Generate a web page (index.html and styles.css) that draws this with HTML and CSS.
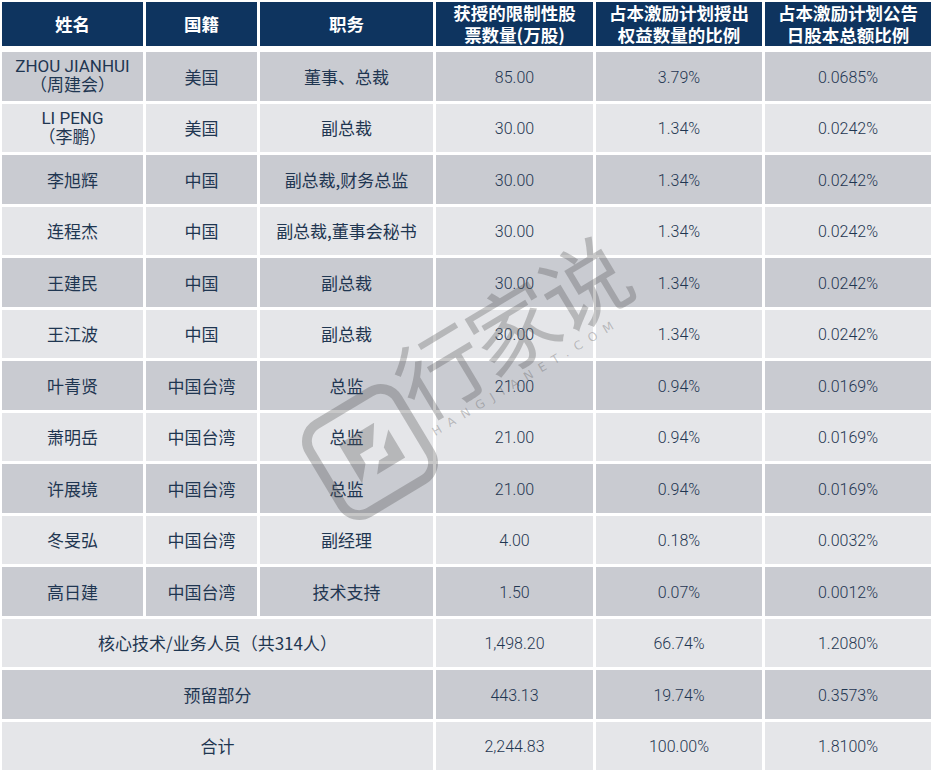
FILE: index.html
```html
<!DOCTYPE html>
<html lang="zh-CN">
<head>
<meta charset="utf-8">
<title>限制性股票分配表</title>
<link rel="stylesheet" href="styles.css">
</head>
<body>
<div class="page">
  <div class="grid">
    <div class="cell head">姓名</div>
    <div class="cell head">国籍</div>
    <div class="cell head">职务</div>
    <div class="cell head">获授的限制性股<br>票数量(万股)</div>
    <div class="cell head">占本激励计划授出<br>权益数量的比例</div>
    <div class="cell head">占本激励计划公告<br>日股本总额比例</div>

    <div class="cell g"><span class="latin">ZHOU JIANHUI<br>（周建会）</span></div>
    <div class="cell g">美国</div>
    <div class="cell g">董事、总裁</div>
    <div class="cell g num">85.00</div>
    <div class="cell g num">3.79%</div>
    <div class="cell g num">0.0685%</div>

    <div class="cell l"><span class="latin">LI PENG<br>（李鹏）</span></div>
    <div class="cell l">美国</div>
    <div class="cell l">副总裁</div>
    <div class="cell l num">30.00</div>
    <div class="cell l num">1.34%</div>
    <div class="cell l num">0.0242%</div>

    <div class="cell g">李旭辉</div>
    <div class="cell g">中国</div>
    <div class="cell g">副总裁,财务总监</div>
    <div class="cell g num">30.00</div>
    <div class="cell g num">1.34%</div>
    <div class="cell g num">0.0242%</div>

    <div class="cell l">连程杰</div>
    <div class="cell l">中国</div>
    <div class="cell l">副总裁,董事会秘书</div>
    <div class="cell l num">30.00</div>
    <div class="cell l num">1.34%</div>
    <div class="cell l num">0.0242%</div>

    <div class="cell g">王建民</div>
    <div class="cell g">中国</div>
    <div class="cell g">副总裁</div>
    <div class="cell g num">30.00</div>
    <div class="cell g num">1.34%</div>
    <div class="cell g num">0.0242%</div>

    <div class="cell l">王江波</div>
    <div class="cell l">中国</div>
    <div class="cell l">副总裁</div>
    <div class="cell l num">30.00</div>
    <div class="cell l num">1.34%</div>
    <div class="cell l num">0.0242%</div>

    <div class="cell g">叶青贤</div>
    <div class="cell g">中国台湾</div>
    <div class="cell g">总监</div>
    <div class="cell g num">21.00</div>
    <div class="cell g num">0.94%</div>
    <div class="cell g num">0.0169%</div>

    <div class="cell l">萧明岳</div>
    <div class="cell l">中国台湾</div>
    <div class="cell l">总监</div>
    <div class="cell l num">21.00</div>
    <div class="cell l num">0.94%</div>
    <div class="cell l num">0.0169%</div>

    <div class="cell g">许展境</div>
    <div class="cell g">中国台湾</div>
    <div class="cell g">总监</div>
    <div class="cell g num">21.00</div>
    <div class="cell g num">0.94%</div>
    <div class="cell g num">0.0169%</div>

    <div class="cell l">冬旻弘</div>
    <div class="cell l">中国台湾</div>
    <div class="cell l">副经理</div>
    <div class="cell l num">4.00</div>
    <div class="cell l num">0.18%</div>
    <div class="cell l num">0.0032%</div>

    <div class="cell g">高日建</div>
    <div class="cell g">中国台湾</div>
    <div class="cell g">技术支持</div>
    <div class="cell g num">1.50</div>
    <div class="cell g num">0.07%</div>
    <div class="cell g num">0.0012%</div>

    <div class="cell l span3">核心技术/业务人员（共314人）</div>
    <div class="cell l num">1,498.20</div>
    <div class="cell l num">66.74%</div>
    <div class="cell l num">1.2080%</div>

    <div class="cell g span3">预留部分</div>
    <div class="cell g num">443.13</div>
    <div class="cell g num">19.74%</div>
    <div class="cell g num">0.3573%</div>

    <div class="cell l span3">合计</div>
    <div class="cell l num">2,244.83</div>
    <div class="cell l num">100.00%</div>
    <div class="cell l num">1.8100%</div>
  </div>

  <div class="watermark" aria-hidden="true">
    <svg class="wm-logo" width="120" height="120" viewBox="0 0 110 110">
      <rect x="8" y="8" width="94" height="94" rx="18" fill="none" stroke="currentColor" stroke-width="9"/>
      <path d="M30 34 H72 L60 52 H46 V62 L34 76 V34 Z" fill="currentColor"/>
      <path d="M50 76 H80 V46 L68 58 V66 H58 Z" fill="currentColor"/>
    </svg>
    <div class="wm-text">
      <div class="wm-big">行家说</div>
      <div class="wm-small">HANGJIANET.COM</div>
    </div>
  </div>
</div>
</body>
</html>
```

FILE: styles.css
```css
html, body {
  margin: 0;
  padding: 0;
  background: #ffffff;
}

.page {
  position: relative;
  width: 931px;
  height: 772px;
  overflow: hidden;
  background: #ffffff;
}

.grid {
  display: grid;
  grid-template-columns: 141px 111px 173px 157px 166px 166px;
  grid-template-rows: 47px repeat(14, 48.5px);
  column-gap: 3px;
  row-gap: 3px;
  padding: 2px 0 0 2px;
}

.cell {
  display: flex;
  align-items: center;
  justify-content: center;
  text-align: center;
  font-family: "Noto Sans CJK SC", "Noto Sans", sans-serif;
  font-size: 17px;
  line-height: 19px;
  color: #1f3651;
}

.head {
  height: 44px;
  align-self: start;
  background: #0e345f;
  color: #ffffff;
  font-weight: 700;
  font-size: 17.5px;
  line-height: 22px;
}

.g {
  background: #c9cbd1;
}

.l {
  background: #e5e6e9;
}

.latin {
  font-family: "Roboto", "Noto Sans CJK SC", sans-serif;
  font-size: 17px;
  line-height: 19px;
}

.num {
  font-family: "Roboto", "Noto Sans", sans-serif;
  font-size: 16px;
  font-weight: 300;
  padding-top: 2px;
}

.span3 {
  grid-column: span 3;
}

.watermark {
  position: absolute;
  left: 310px;
  top: 392px;
  display: flex;
  align-items: center;
  color: rgba(85, 85, 85, 0.32);
  transform: rotate(-31deg);
  transform-origin: 60px 60px;
  pointer-events: none;
}

.wm-logo {
  display: block;
  flex: none;
}

.wm-text {
  display: flex;
  flex-direction: column;
  align-items: flex-start;
  transform: translate(-2px, -30px);
}

.wm-big {
  font-family: "Noto Sans CJK SC", sans-serif;
  font-weight: 400;
  font-size: 88px;
  line-height: 92px;
  letter-spacing: -4px;
}

.wm-small {
  font-family: "DejaVu Sans", sans-serif;
  font-size: 12px;
  letter-spacing: 8px;
  padding-left: 6px;
}
```
